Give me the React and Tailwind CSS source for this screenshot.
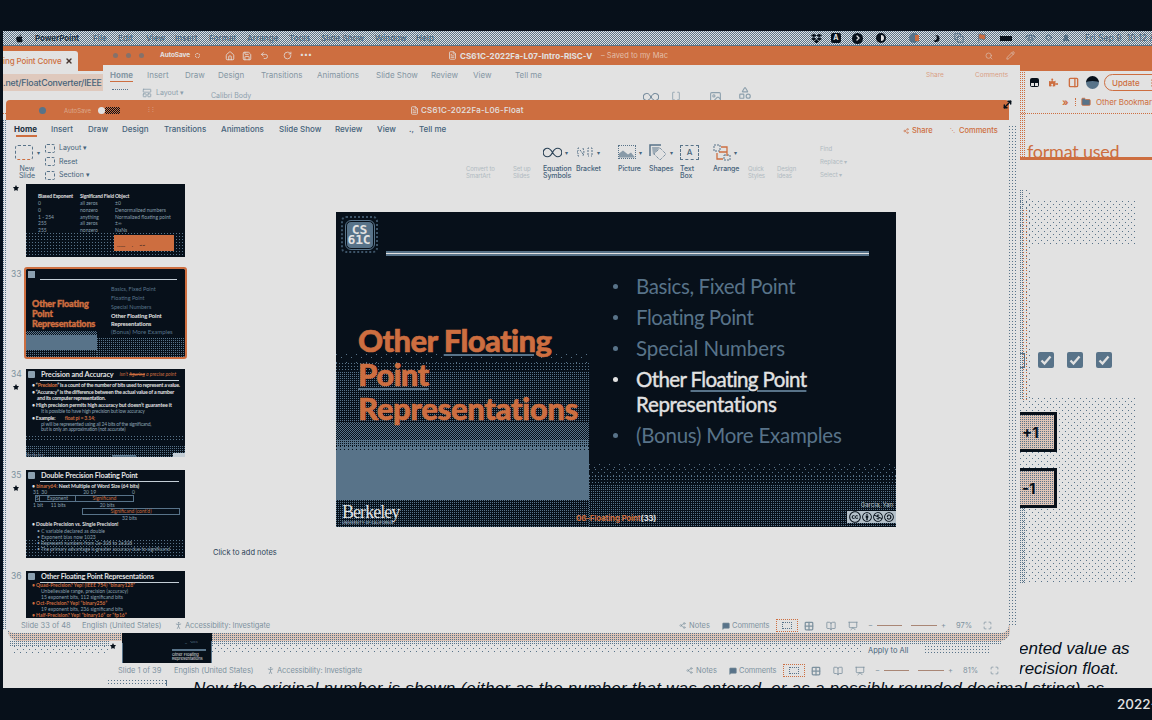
import React from "react";
import { FaApple, FaDropbox, FaMoon, FaStar, FaPuzzlePiece, FaCreativeCommonsBy, FaCreativeCommonsNc, FaCreativeCommonsSa, FaCreativeCommons } from "react-icons/fa";
import { Wifi, Search, ChevronRight, Copy, Flag, Undo2, RotateCw, Home, Save, FileText, Image, Shapes, PersonStanding, MessageSquare, Grid2x2, BookOpen, Presentation, Maximize, PanelRight, Folder, MoreVertical, Share2, Pencil, X, Brackets, UserRound, LayoutPanelTop, MoveDiagonal2 } from "lucide-react";

/* Dot screens used for shadows and gradients */
const HALF = "bg-[repeating-conic-gradient(#587389_0_25%,transparent_0_50%)] bg-[size:2px_2px]";
const QUARTER = "bg-[conic-gradient(from_270deg_at_1px_1px,#587389_90deg,transparent_0)] bg-[size:2px_2px]";
const NINTH = "bg-[conic-gradient(from_270deg_at_1px_1px,#587389_90deg,transparent_0)] bg-[size:3px_3px]";
const SPARSE = "bg-[conic-gradient(from_270deg_at_1px_1px,#587389_90deg,transparent_0),conic-gradient(from_270deg_at_1px_1px,#587389_90deg,transparent_0)] bg-[size:6px_6px] bg-[position:0_0,3px_3px]";
const FAINT = "bg-[conic-gradient(from_270deg_at_1px_1px,#587389_90deg,transparent_0),conic-gradient(from_270deg_at_1px_1px,#587389_90deg,transparent_0)] bg-[size:10px_8px] bg-[position:0_0,5px_3px]";
const DENSE = "bg-[#587389] bg-[conic-gradient(from_270deg_at_1px_1px,#07101a_90deg,transparent_0)] bg-[size:2px_2px]";
const DENSER = "bg-[#587389] bg-[conic-gradient(from_270deg_at_1px_1px,#07101a_90deg,transparent_0)] bg-[size:4px_3px]";
const WARM = "bg-[#dcc3b6] bg-[conic-gradient(from_270deg_at_1px_1px,#587389_90deg,transparent_0)] bg-[size:2px_2px]";

function Cells({ items, className }) {
  return (
    <div className={"flex items-center whitespace-nowrap " + className}>
      {items.map(([label, w], i) => (
        <span key={i} className={"shrink-0 " + w}>{label}</span>
      ))}
    </div>
  );
}

const menus = [
  ["File", "w-[25px]"], ["Edit", "w-[28px]"], ["View", "w-[29px]"], ["Insert", "w-[34px]"], ["Format", "w-[38px]"],
  ["Arrange", "w-[42px]"], ["Tools", "w-[32px]"], ["Slide Show", "w-[54px]"], ["Window", "w-[41px]"], ["Help", "w-[30px]"],
];

function MenuBar() {
  return (
    <div className={"h-[15px] shrink-0 flex items-center border-b border-[#587389] text-[8px] tracking-[0.1px] text-[#46637a] pl-3 " + HALF}>
      <FaApple className="size-[9px] text-[#07101a] mr-[11px] shrink-0" />
      <span className="w-[58px] shrink-0 font-bold text-[#1b2f40] tracking-[-0.1px]">PowerPoint</span>
      <Cells items={menus} className="font-medium" />
      <div className="ml-auto flex items-center shrink-0 text-[#07101a] w-[341px] [&>*]:shrink-0">
        <FaDropbox className="size-[11px] mr-[9px]" />
        <span className="size-[10px] rounded-[2px] bg-[#07101a] text-[#e2e2e2] text-[7px] leading-[10px] text-center font-bold mr-[11px]">A</span>
        <span className="size-[11px] rounded-full bg-[#07101a] text-[#e2e2e2] flex items-center justify-center mr-[13px]"><ChevronRight size={8} strokeWidth={4} /></span>
        <span className="size-[10px] rounded-full bg-[#07101a] flex items-center justify-end pr-[2px] mr-[23px]"><span className="w-[3px] h-[6px] rounded-r-full bg-[#e2e2e2]" /></span>
        <span className="size-[10px] rounded-full bg-[#587389] flex items-center justify-end mr-[14px]"><span className="w-[4px] h-[6px] bg-[#cd6e40]" /></span>
        <FaMoon className="size-[7px] mr-[14px] -scale-x-100" />
        <Copy size={10} strokeWidth={2.5} className="text-[#587389] mr-[13px]" />
        <Flag size={10} className="text-[#587389] fill-[#cd6e40] mr-[13px]" />
        <span className="w-[12px] h-[5px] bg-[#07101a] mr-[13px]" />
        <Wifi size={11} strokeWidth={3} className="text-[#587389] mr-[9px]" />
        <Search size={8} strokeWidth={3} className="text-[#587389] mr-[9px]" />
        <UserRound size={8} strokeWidth={3} className="text-[#46637a] fill-[#587389] mr-[15px]" />
        <span className="whitespace-nowrap text-[8.5px] text-[#46637a]">Fri Sep 9&nbsp; 10:12 A</span>
      </div>
    </div>
  );
}

function Browser() {
  return (
    <div className="flex-1 min-h-0 flex flex-col relative overflow-hidden">
      <div className="h-[25px] bg-[#cd6e40] shrink-0 flex items-end">
        <div className="w-[75px] h-[20px] bg-[#e2e2e2] rounded-tr-[3px] flex items-center text-[8px] text-[#cd6e40] whitespace-nowrap">
          <span className="w-[62px] shrink-0 font-medium tracking-[-0.1px]">ing Point Conve</span>
          <X size={8} strokeWidth={4} className="text-[#46352f] shrink-0" />
        </div>
      </div>
      <div className="h-[29px] shrink-0 flex justify-between pt-[3px]">
        <div className="w-[110px] h-[17px] bg-[#dfc9bd] text-[8.8px] leading-[17px] text-[#46637a] whitespace-nowrap font-medium tracking-[-0.2px]">.net/FloatConverter/IEEE</div>
        <div className="w-[125px] h-[17px] flex items-center text-[#cd6e40]">
          <span className="size-[9px] rounded-[2px] bg-[#07101a] flex items-end justify-center gap-px pb-px mr-[10px] ml-[3px] shrink-0"><span className="size-[3px] bg-[#e2e2e2]" /><span className="size-[3px] bg-[#e2e2e2]" /></span>
          <FaPuzzlePiece className="size-[9px] mr-[10px] shrink-0" />
          <PanelRight size={11} strokeWidth={3} className="mr-[7px] shrink-0" />
          <span className="size-[13px] rounded-full bg-[#587389] border-t-[5px] border-[#07101a] mr-[5px] shrink-0" />
          <span className="h-[17px] w-[70px] shrink-0 rounded-l-full border border-[#cd6e40] flex items-center pl-[7px] text-[8px] font-medium">Update<MoreVertical size={10} className="ml-[7px]" /></span>
        </div>
      </div>
      <div className="h-[20px] -mt-[6px] shrink-0 flex items-center justify-end text-[8px] tracking-[-0.1px] text-[#cd6e40] border-b border-dotted border-[#cd6e40] whitespace-nowrap">
        <div className="w-[90px] flex items-center shrink-0 -mt-[4px]">
          <span className="text-[10px] leading-[10px] font-bold w-[13px] shrink-0">»</span><span className="w-[6px] shrink-0 border-l border-dotted border-[#cd6e40] h-[8px]" />
          <Folder size={10} className="fill-[#587389] mr-[5px] shrink-0" />Other Bookmark
        </div>
      </div>
      <div className="flex-1 flex flex-col pl-[1017px]">
        <div className="h-[46px] shrink-0 border-b-[3px] border-[#cd6e40] pt-[26px] pl-[7px] text-[18px] leading-[23px] text-[#cd6e40] font-['Lato'] tracking-[-0.22px] whitespace-nowrap">format used</div>
        <div className={"mt-[41px] w-[115px] h-[45px] shrink-0 " + SPARSE} />
        <div className="h-[122px] flex gap-[13px] shrink-0 mb-[30px] items-end">
          <span className="w-[5px] h-[15px] border border-l-0 border-[#587389]" />
          {[0, 1, 2].map((k) => (
            <span key={k} className="size-[16px] rounded-[2px] bg-[#587389] flex items-center justify-center">
              <svg viewBox="0 0 12 12" className="size-[12px]"><path d="M1.5 6.5l3 3 6-7" fill="none" stroke="#e2e2e2" strokeWidth="2.3" /></svg>
            </span>
          ))}
        </div>
        <div className={"w-[115px] h-[185px] shrink-0 pt-[14px] flex flex-col gap-[16px] " + SPARSE}>
          {["+1", "-1"].map((s) => (
            <div key={s} className="w-[37px] h-[40px] border-[3px] border-l-0 border-[#07101a] bg-[#e2e2e2]">
              <div className={"h-full text-[15px] leading-[35px] font-bold text-[#07101a] pl-[2px] font-['Inter'] " + WARM}>{s}</div>
            </div>
          ))}
        </div>
      </div>
      <div className="h-[49px] shrink-0 font-['Liberation_Sans'] italic text-[17px] leading-[20px] text-[#07101a] whitespace-nowrap">
        <div className="pl-[1016px]">ented value as</div>
        <div className="pl-[1016px]">recision float.</div>
        <div className="pl-[190px] tracking-[0.23px]">Now the original number is shown (either as the number that was entered, or as a possibly rounded decimal string) as</div>
      </div>
    </div>
  );
}

function StatusBar({ slide, zoom, first, w, right }) {
  return (
    <div className={"h-[15px] shrink-0 flex items-center text-[7.5px] text-[#7e929f] whitespace-nowrap " + first}>
      <span className={"shrink-0 " + w}>{slide}</span>
      <span className="w-[92px] shrink-0 tracking-[-0.05px]">English (United States)</span>
      <PersonStanding size={9} className="mr-[2px]" />
      <span className="tracking-[-0.1px]">Accessibility: Investigate</span>
      <div className={"ml-auto flex items-center shrink-0 " + right}>
        <Share2 size={7} className="mr-[3px]" /><span className="w-[33px]">Notes</span>
        <MessageSquare size={8} className="fill-[#587389] mr-[2px]" /><span className="w-[44px] tracking-[-0.1px]">Comments</span>
        <span className="w-[22px] h-[13px] border border-dotted border-[#cd6e40] flex items-center justify-center mr-[6px]"><span className="w-[10px] h-[7px] border border-dotted border-[#587389]" /></span>
        <Grid2x2 size={10} strokeWidth={3} className="mr-[12px]" />
        <BookOpen size={10} className="mr-[12px]" />
        <Presentation size={10} className="mr-[10px]" />
        <span className="w-[9px]">−</span>
        <span className="w-[25px] h-px bg-[#a98675] mr-[9px]" /><span className="w-[26px] h-px bg-[#a98675] mr-[4px]" />
        <span className="w-[15px]">+</span><span className="w-[27px]">{zoom}</span>
        <Maximize size={9} />
      </div>
    </div>
  );
}

const backTabs = [
  ["Home", "w-[37px] font-bold"], ["Insert", "w-[38px]"], ["Draw", "w-[33px]"], ["Design", "w-[43px]"], ["Transitions", "w-[56px]"],
  ["Animations", "w-[59px]"], ["Slide Show", "w-[55px]"], ["Review", "w-[42px]"], ["View", "w-[42px]"], ["Tell me", "w-[40px]"],
];

function BackWindow() {
  return (
    <section className="absolute left-[103px] top-[46px] w-[917px] h-[634px] rounded-b-[8px] bg-[#e2e2e2] flex flex-col overflow-hidden">
      <header className="h-[19px] shrink-0 bg-[#cd6e40] flex items-center text-[#e2e2e2] text-[7px] whitespace-nowrap pl-[10px] [&>*]:shrink-0">
        <div className="flex gap-[8px] w-[47px]">
          <span className="size-[5px] rounded-full bg-[#85716a]" /><span className="size-[5px] rounded-full bg-[#85716a]" /><span className="size-[5px] rounded-full bg-[#85716a]" />
        </div>
        <span className="w-[35px] font-bold text-[6.5px] tracking-[-0.1px]">AutoSave</span><span className="size-[5px] rounded-full border border-dotted border-[#e2e2e2] mr-[25px]" />
        <Home size={10} className="mr-[7px]" /><Save size={10} className="mr-[8px]" /><Undo2 size={9} className="mr-[14px]" /><RotateCw size={9} className="mr-[8px]" />
        <span className="w-[148px]">•••</span>
        <FileText size={9} className="mr-[3px]" />
        <span className="font-bold text-[8px] w-[141px] tracking-[0.05px]">CS61C-2022Fa-L07-Intro-RISC-V</span>
        <span className="text-[7.5px] text-[#e3bea9]">– Saved to my Mac</span>
        <Search size={8} className="ml-auto mr-[13px] opacity-70" /><Pencil size={9} className="mr-[5px] opacity-70" />
      </header>
      <div className="h-[19px] shrink-0 flex items-center pl-[7px] text-[8px] text-[#8496a2]">
        <Cells items={backTabs} className="" />
        <span className="ml-auto text-[6.500px] pt-[3px] text-[#d9a084] w-[49px]">Share</span>
        <span className="text-[6.500px] pt-[3px] text-[#d9a084] w-[45px]">Comments</span>
      </div>
      <div className="h-px w-[23px] ml-[7px] bg-[#cd6e40] shrink-0 -mt-[3px]" />
      <div className="h-[18px] mt-[2px] shrink-0 flex items-center pl-[9px] text-[#8da0ad] text-[7px]">
        <span className="w-[16px] h-[9px] border-t border-dotted border-[#587389] mr-[14px]" />
        <LayoutPanelTop size={10} className="mr-[4px]" /><span className="w-[55px]">Layout ▾</span>
        <span className="w-[432px] pt-[6px] leading-[8px]">Calibri Body</span>
        <span className="mr-[12px] mt-[8px]"><svg viewBox="0 0 18 10" className="w-[16px] h-[10px]"><path d="M9 5C7 1.500 5.500 1 4.200 1a4 4 0 000 8C6 9 7.500 8 9 5s3-4 4.800-4a4 4 0 010 8C12 9 11 8 9 5z" fill="none" stroke="#587389" /></svg></span><Brackets size={10} className="mr-[28px] mt-[6px]" />
        <Image size={13} className="mr-[16px] mt-[9px]" /><Shapes size={14} />
      </div>
      <div className="mt-auto h-[47px] shrink-0 flex flex-col">
        <div className="flex h-[30px]">
          <FaStar className="size-[6px] ml-[7px] mr-[6px] mt-[10px] text-[#07101a]" />
          <div className="w-[90px] h-[30px] bg-[#07101a] border-x border-[#587389] flex justify-end pr-[5px]">
            <div className="w-[34px] pt-[3px] text-[4px] leading-[4.4px] text-[#587389] whitespace-nowrap">
              <div>Basics, Fixed</div><div className="mb-[4px]">Floating Point</div><div className="h-[2px] bg-[#587389] mb-[2px]" /><div className="text-[#e2e2e2]">Other Floating</div><div className="text-[#e2e2e2]">Representations</div>
            </div>
          </div>
          <span className="ml-[656px] mt-[12px] text-[7.5px] leading-[12px] text-[#46637a] whitespace-nowrap">Apply to All</span>
        </div>
        <StatusBar slide="Slide 1 of 39" zoom="81%" first="pl-[15px]" w="w-[56px]" right="pr-[21px]" />
      </div>
    </section>
  );
}

const tabs = [
  ["Home", "w-[37px] font-bold text-[#1b2f40]"], ["Insert", "w-[37px]"], ["Draw", "w-[34px]"], ["Design", "w-[42px]"], ["Transitions", "w-[57px]"],
  ["Animations", "w-[58px]"], ["Slide Show", "w-[56px]"], ["Review", "w-[42px]"], ["View", "w-[32px]"], [".,", "w-[10px]"], ["Tell me", "w-[40px]"],
];

function Tool({ icon, label, className, caret = true }) {
  return (
    <div className={"shrink-0 flex flex-col text-[7px] leading-[7px] text-[#46637a] font-medium tracking-[-0.1px] " + className}>
      <div className="h-[20px] flex items-center gap-[3px] mb-[3px]">{icon}{caret && <span className="text-[6px]">▾</span>}</div>
      <div className="whitespace-pre-line">{label}</div>
    </div>
  );
}

function Ribbon() {
  return (
    <div className="h-[42px] shrink-0 flex pt-[2px] pl-[9px] text-[#587389]">
      <div className="w-[30px] shrink-0 text-[7px] leading-[7px] text-[#46637a]">
        <div className="flex items-center gap-[4px] h-[20px] mb-[3px]"><span className="w-[18px] h-[15px] shrink-0 rounded-[3px] border border-dashed border-[#587389] border-b-[#cd6e40]" /><span className="text-[6px]">▾</span></div>
        <div className="text-center w-[24px]">New<br />Slide</div>
      </div>
      <div className="w-[421px] shrink-0 flex flex-col text-[7px] text-[#46637a]">
        {["Layout ▾", "Reset", "Section ▾"].map((s) => (
          <div key={s} className="h-[13.3px] flex items-center gap-[4px]"><span className="w-[10px] h-[9px] rounded-[2px] border border-dashed border-[#587389]" />{s}</div>
        ))}
      </div>
      <Tool className="w-[47px] !text-[#b0bac1] !text-[6px] !font-normal" icon={<span />} caret={false} label={"Convert to\nSmartArt"} />
      <Tool className="w-[30px] !text-[#b0bac1] !text-[6px] !font-normal" icon={<span />} caret={false} label={"Set up\nSlides"} />
      <Tool className="w-[33px]" icon={<svg viewBox="0 0 18 10" className="w-[19px] h-[11px]"><path d="M9 5C7 1.5 5.5 1 4.2 1a4 4 0 000 8C6 9 7.500 8 9 5s3-4 4.800-4a4 4 0 010 8C12 9 11 8 9 5z" fill="none" stroke="#2b4357" strokeWidth="1.100" /></svg>} label={"Equation\nSymbols"} />
      <Tool className="w-[42px]" icon={<svg viewBox="0 0 18 10" className="w-[18px] h-[10px] shrink-0" fill="none" stroke="#587389" strokeDasharray="2 1"><path d="M3 1H2v3L1 5l1 1v3h1M4 3l3 4M7 1l1 4-1 4M13 1h-1v8h1M15 1h1v8h-1" /></svg>} label="Bracket" />
      <Tool className="w-[31px]" icon={<span className="w-[18px] h-[14px] border border-dotted border-[#587389] flex items-end shrink-0"><svg viewBox="0 0 16 8" className="w-full h-[9px]"><path d="M0 8V4l4-3 5 4 3-2 4 5z" fill="#587389" opacity=".65" /></svg></span>} label="Picture" />
      <Tool className="w-[31px]" icon={<svg viewBox="0 0 18 17" className="w-[18px] h-[17px] shrink-0"><path d="M1 12V1h11" fill="none" stroke="#587389" strokeWidth="1.500" /><path d="M3 3h8L4 11z" fill="#587389" opacity=".5" /><path d="M11 4l6 6-6 6-6-6z" fill="none" stroke="#587389" strokeDasharray="1 1" /></svg>} label="Shapes" />
      <Tool className="w-[33px]" icon={<span className="w-[19px] h-[15px] border border-dashed border-[#587389] text-[8px] leading-[13px] text-center">A</span>} caret={false} label={"Text\nBox"} />
      <Tool className="w-[35px]" icon={<svg viewBox="0 0 18 17" className="w-[18px] h-[17px] shrink-0" fill="none"><path d="M1 1h6v6H1zM11 11h6v5h-6z" stroke="#587389" strokeDasharray="2 1" /><path d="M8 3h6v5M4 9v6h6M6 8h8v4" stroke="#cd6e40" strokeWidth="1.300" /></svg>} label="Arrange" />
      <Tool className="w-[29px] !text-[#b0bac1] !text-[6px] !font-normal" icon={<span />} caret={false} label={"Quick\nStyles"} />
      <Tool className="w-[43px] !text-[#b0bac1] !text-[6px] !font-normal" icon={<span />} caret={false} label={"Design\nIdeas"} />
      <div className="text-[6px] text-[#b0bac1] flex flex-col">{["Find", "Replace ▾", "Select ▾"].map((s) => <span key={s} className="h-[13px] leading-[13px]">{s}</span>)}</div>
    </div>
  );
}

function ThumbFoot() {
  return (
    <div className={"mt-auto h-[11px] shrink-0 flex items-end justify-between " + QUARTER}>
      <span className="text-[5px] leading-[5px] text-[#8ba0b0] font-['Liberation_Serif']">Berkeley</span>
      <span className="w-[24px] h-[2px] bg-[#587389] ml-[30px]" />
      <span className="w-[12px] h-[4px] bg-[#c4ced6]" />
    </div>
  );
}

function ThumbHead({ children, extra, className = "" }) {
  return (
    <>
      <div className="h-[10px] flex items-center pl-[2px] shrink-0">
        <span className="size-[7px] bg-[#8ba0b0] rounded-[1px] mr-[6px] shrink-0" />
        <span className={"text-[7.300px] leading-[9px] font-bold text-[#e2e2e2] " + className}>{children}</span>
        <span className="text-[5px] text-[#cd6e40] italic ml-[6px]">{extra}</span>
      </div>
      <div className="h-px mt-px ml-[14px] mr-[6px] bg-[#c4ced6] shrink-0" />
    </>
  );
}

function Thumb({ n, star, selected, children, className }) {
  return (
    <div className="flex shrink-0">
      <div className="w-[20px] pl-[5px] pt-[1px] text-[8.5px] leading-[9px] text-[#7e929f]">{n}{star && <FaStar className={"size-[6px] ml-[2px] text-[#07101a] " + (n ? "mt-[5px]" : "")} />}</div>
      <div className={"w-[159px] bg-[#07101a] flex flex-col overflow-hidden whitespace-nowrap text-[5px] leading-[6px] text-[#8ba0b0] font-['Lato'] " + className + (selected ? " outline-2 outline-[#cd6e40] rounded-[1px]" : "")}>{children}</div>
    </div>
  );
}

function Thumbs() {
  const rows = [["0", "all zeros", "±0"], ["0", "nonzero", "Denormalized numbers"], ["1 - 254", "anything", "Normalized floating point"], ["255", "all zeros", "±∞"], ["255", "nonzero", "NaNs"]];
  return (
    <aside className="w-[199px] h-[436px] shrink-0 pt-[2px] flex flex-col overflow-hidden">
      <Thumb star className="h-[73px] mb-[12px]">
        <div className="grid grid-cols-[42px_35px_1fr] pl-[12px] pt-[9px] text-[5px] font-bold text-[#e2e2e2] tracking-[-0.15px]"><span>Biased Exponent</span><span>Significand Field</span><span>Object</span></div>
        {rows.map((r, i) => <div key={i} className="grid grid-cols-[42px_35px_1fr] pl-[12px] h-[6.8px] pt-[1px]">{r.map((c, j) => <span key={j}>{c}</span>)}</div>)}
        <div className={"flex-1 flex items-start justify-end pr-[11px] pt-[2px] " + NINTH}><div className="w-[60px] h-[16px] bg-[#cd6e40] text-[#07101a] pl-[3px] pt-[7px] leading-[6px]">....... &nbsp; &nbsp; . &nbsp; &nbsp; ~~</div></div>
      </Thumb>
      <Thumb n="33" selected className="h-[88px] mb-[12px]">
        <div className="h-[12px] flex items-start pl-[2px] pt-[2px] shrink-0"><span className="size-[7px] bg-[#8ba0b0]" /><span className="mt-[8px] ml-[5px] h-px w-[137px] bg-[#c4ced6]" /></div>
        <div className="flex flex-1 pt-[4px]">
          <div className="w-[71px] flex flex-col">
            <div className="pl-[6px] pt-[14px] h-[46px] text-[9px] leading-[10px] font-black text-[#cd6e40] tracking-[-0.15px] [-webkit-text-stroke:0.4px_#cd6e40]">Other Floating<br />Point<br />Representations</div>
            <div className={"h-[4px] " + HALF} /><div className="h-[15px] bg-[#587389]" /><div className={"flex-1 " + QUARTER} />
          </div>
          <div className="flex-1 flex flex-col">
            <div className="pl-[14px] flex flex-col text-[5.500px] leading-[8px] text-[#587389]">
              <span className="h-[9px]">Basics, Fixed Point</span><span className="h-[9px]">Floating Point</span><span className="h-[9px]">Special Numbers</span>
              <span className="text-[#e2e2e2] font-bold text-[5.800px] tracking-[-0.1px]">Other Floating Point<br />Representations</span><span className="text-[6px]">(Bonus) More Examples</span>
            </div>
            <div className={"mt-[2px] flex-1 " + QUARTER} />
          </div>
        </div>
      </Thumb>
      <Thumb n="34" star className="h-[88px] mb-[13px]">
        <ThumbHead className="tracking-[-0.1px]" extra={<>isn’t <s>figuring</s> a precise point</>}>Precision and Accuracy</ThumbHead>
        <div className="pl-[6px] pt-[1px] text-[#e2e2e2] font-bold leading-[6.600px] text-[5.200px] tracking-[-0.2px]">
          <div>• “<b className="text-[#cd6e40]">Precision</b>” is a count of the number of bits used to represent a value.</div>
          <div>• “Accuracy” is the difference between the actual value of a number</div>
          <div className="pl-[5px]">and its computer representation.</div>
          <div className="tracking-[-0.08px]">• High precision permits high accuracy but doesn’t guarantee it</div>
          <div className="pl-[9px] font-normal text-[#8ba0b0] text-[5px]">It is possible to have high precision but low accuracy</div>
          <div>• Example: &nbsp; &nbsp; &nbsp; &nbsp; <span className="text-[#cd6e40]">float pi = 3.14;</span></div>
          <div className="pl-[9px] font-normal text-[#8ba0b0] text-[5px] leading-[5px]">pi will be represented using all 24 bits of the significand,<br />but is only an approximation (not accurate)</div>
        </div>
        <div className={"mt-auto h-[6px] " + NINTH} /><ThumbFoot />
      </Thumb>
      <Thumb n="35" star className="h-[88px] mb-[13px]">
        <ThumbHead className="tracking-[-0.18px]">Double Precision Floating Point</ThumbHead>
        <div className="pl-[6px] mt-[1px] text-[#e2e2e2] font-bold text-[5.200px] tracking-[-0.05px]">• <span className="text-[#cd6e40]">binary64:</span> Next Multiple of Word Size (64 bits)</div>
        <div className="pl-[7px] pr-[50px] flex justify-between leading-[6px]"><span>31 &nbsp;30</span><span>20 19</span><span>0</span></div>
        <div className="ml-[9px] w-[99px] h-[7px] border border-[#587389] flex shrink-0 leading-[5px]"><span className="w-[4px] border-r border-[#587389]">S</span><span className="w-[36px] text-center border-r border-[#587389]">Exponent</span><span className="flex-1 text-center text-[#cd6e40]">Significand</span></div>
        <div className="pl-[7px] leading-[6px]">1 bit &nbsp; &nbsp; &nbsp;11 bits<span className="ml-[34px]">20 bits</span></div>
        <div className="ml-[56px] w-[98px] h-[7px] border border-[#587389] text-center text-[#cd6e40] leading-[5px] shrink-0">Significand (cont’d)</div>
        <div className="pl-[96px] leading-[6px]">32 bits</div>
        <div className="pl-[6px] text-[#e2e2e2] font-bold leading-[7px]">• Double Precision vs. Single Precision!</div>
        <div className="pl-[11px] leading-[6px]">• C variable declared as double<br />• Exponent bias now 1023</div>
        <div className={"flex-1 pl-[11px] leading-[6px] tracking-[-0.05px] " + NINTH}>• Represent numbers from 2e-308 to 2e308<br />• The primary advantage is greater accuracy due to significand</div>
      </Thumb>
      <Thumb n="36" className="h-[47px]">
        <ThumbHead className="tracking-[-0.22px]">Other Floating Point Representations</ThumbHead>
        <div className="pl-[6px] leading-[5.900px]">
          <div className="text-[#cd6e40] font-bold">• Quad-Precision? Yep! (IEEE 754) “binary128”</div>
          <div className="pl-[9px]">Unbelievable range, precision (accuracy)<br />15 exponent bits, 112 significand bits</div>
          <div className="text-[#cd6e40] font-bold">• Oct-Precision? Yep! “binary256”</div>
          <div className="pl-[9px]">19 exponent bits, 236 significand bits</div>
          <div className="text-[#cd6e40] font-bold">• Half-Precision? Yep! “binary16” or “fp16”</div>
        </div>
      </Thumb>
    </aside>
  );
}

function Chip() {
  return (
    <div className="size-[37px] border-2 border-dotted border-[#3d5468] rounded-[5px] flex items-center justify-center ml-[5px] mt-[4px] shrink-0">
      <div className="size-[28px] rounded-[5px] border border-[#07101a] outline outline-[#587389] bg-[#587389] text-[#e2e2e2] font-bold font-['DejaVu_Sans_Mono'] text-[13px] leading-[10px] text-center pt-[3px] tracking-[-0.2px]">CS<br /><span className="-ml-[1px]">61C</span></div>
    </div>
  );
}

function Bullet({ children, bright, className, track = "tracking-[-0.38px]" }) {
  return (
    <li className={"flex " + className}>
      <span className={"size-[5px] rounded-full mt-[13px] mr-[18px] shrink-0 " + (bright ? "bg-[#e2e2e2]" : "bg-[#587389]")} />
      <span className={"whitespace-nowrap pt-[3px] " + track + (bright ? " text-[#e2e2e2] [-webkit-text-stroke:0.4px_#e2e2e2]" : " text-[#587389]")}>{children}</span>
    </li>
  );
}

function Slide() {
  return (
    <div className="w-[560px] h-[315px] bg-[#07101a] flex flex-col overflow-hidden relative">
      <div className="absolute inset-x-0 bottom-0 h-[173px] flex" aria-hidden="true">
        <div className="w-[253px] flex flex-col">
          <div className={"h-[9px] " + FAINT} /><div className={"h-[9px] " + NINTH} /><div className={"h-[51px] " + QUARTER} /><div className={"h-[16px] " + HALF} /><div className={"h-[7px] " + DENSE} /><div className={"h-[6px] " + DENSER} />
          <div className="h-[48px] bg-[#587389]" /><div className={"flex-1 " + QUARTER} />
        </div>
        <div className="flex-1 flex flex-col justify-end"><div className={"h-[5px] " + FAINT} /><div className={"h-[7px] " + SPARSE} /><div className={"h-[9px] " + NINTH} /><div className={"h-[42px] " + QUARTER} /></div>
      </div>
      <div className="flex h-[44px] shrink-0">
        <Chip />
        <div className="mt-[39px] ml-[8px] w-[483px] h-[5px] shrink-0 bg-[#587389] py-[2px]"><div className="h-px bg-[#e2e2e2]" /></div>
      </div>
      <div className="flex h-[240px] shrink-0 relative font-['Lato']">
        <h1 className="w-[277px] shrink-0 pl-[22px] pt-[67px] text-[31px] leading-[34px] font-black text-[#cd6e40] whitespace-nowrap [-webkit-text-stroke:0.6px_#cd6e40] tracking-[-0.62px]">
          Other <span className="underline decoration-[#587389] decoration-2 underline-offset-[2px]">Floating</span><br /><span className="underline decoration-[#587389] decoration-2 underline-offset-[2px]">Point</span><br /><span className="tracking-[-0.36px]">Representations</span>
        </h1>
        <ul className="pt-[15px] text-[20.5px] leading-[25px]">
          <Bullet className="h-[31px]">Basics, Fixed Point</Bullet>
          <Bullet className="h-[31px]" track="tracking-[-0.52px]">Floating Point</Bullet>
          <Bullet className="h-[31px]" track="tracking-[-0.1px]">Special Numbers</Bullet>
          <Bullet className="h-[56px]" track="tracking-[-0.62px]" bright>Other <span className="underline decoration-[#587389] decoration-2 underline-offset-[3px]">Floating Point</span><br /><span className="tracking-[-0.3px]">Representations</span></Bullet>
          <Bullet className="h-[31px]" track="tracking-[-0.25px]">(Bonus) More Examples</Bullet>
        </ul>
      </div>
      <footer className="flex-1 flex relative">
        <div className="pl-[6px] pt-[7px] w-[120px]"><div className="font-['Liberation_Serif'] text-[18px] leading-[18px] text-[#e2e2e2] tracking-[-0.95px]">Berkeley</div><div className="text-[3.500px] leading-[4px] text-[#8ba0b0] font-bold tracking-[0.1px] whitespace-nowrap">UNIVERSITY OF CALIFORNIA</div></div>
        <div className="pt-[17px] ml-[120px] text-[8px] leading-[11px] font-bold text-[#cd6e40] tracking-[-0.2px] whitespace-nowrap">06-Floating Point<span className="text-[#e2e2e2]">(33)</span></div>
        <div className="ml-auto w-[100px] flex flex-col items-end pt-[5px]">
          <span className="text-[6px] leading-[8px] text-[#b4c0c9] pr-[3px]">Garcia, Yan</span>
          <div className="w-[49px] h-[12px] mt-[2px] bg-[#b4c0c9] flex items-center text-[#07101a] pl-[2px] gap-[1px]"><FaCreativeCommons className="size-[12px]" /><FaCreativeCommonsBy className="size-[10px]" /><FaCreativeCommonsNc className="size-[10px]" /><FaCreativeCommonsSa className="size-[10px]" /></div>
        </div>
      </footer>
    </div>
  );
}

function FrontWindow() {
  return (
    <section className="absolute left-[6px] top-[100px] w-[1003px] h-[533px] bg-[#e2e2e2] rounded-t-[4px] rounded-b-[8px] flex flex-col overflow-hidden">
      <header className="h-[20px] shrink-0 bg-[#cd6e40] flex items-center text-[#e2e2e2] whitespace-nowrap pl-[33px] text-[7px] [&>*]:shrink-0">
        <span className="size-[7px] rounded-full bg-[#587389] mr-[18px]" />
        <span className="w-[34px] text-[#dba98e] text-[6px]">AutoSave</span>
        <span className="size-[7px] rounded-full bg-[#e2e2e2] z-10" />
        <span className="w-[15px] h-[7px] bg-[repeating-conic-gradient(#07101a_0_25%,transparent_0_50%)] bg-[size:2px_2px] mr-[28px]" />
        <span className="w-[262px] text-[#dba98e]">⁝ ⁝</span>
        <FileText size={9} className="mr-[2px]" />
        <span className="text-[8px] tracking-[0.18px] font-medium">CS61C-2022Fa-L06-Float</span>
      </header>
      <div className="h-[20px] shrink-0 flex items-center pl-[8px] pb-[2px] text-[8px] text-[#46637a] font-medium">
        <Cells items={tabs} className="" />
        <div className="ml-auto flex items-center text-[#cd6e40] text-[7.5px] pt-[3px]"><Share2 size={6} className="mr-[3px]" /><span className="w-[38px]">Share</span><span className="w-[9px] text-[5px]">⋱</span><span className="w-[50px]">Comments</span></div>
      </div>
      <div className="h-[2px] w-[21px] ml-[10px] -mt-[5px] mb-[3px] bg-[#cd6e40] shrink-0" />
      <Ribbon />
      <div className="flex flex-1 min-h-0">
        <Thumbs />
        <main className="flex-1 flex flex-col">
          <div className="pl-[131px] pt-[30px]"><Slide /></div>
          <p className="pl-[8px] pt-[20px] text-[7.5px] leading-[12px] text-[#2b4357]">Click to add notes</p>
        </main>
      </div>
      <StatusBar slide="Slide 33 of 48" zoom="97%" first="pl-[15px]" w="w-[61px]" right="pr-[17px]" />
    </section>
  );
}

export default function App() {
  return (
    <div className="w-[1152px] h-[720px] bg-[#07101a] relative overflow-hidden font-['Inter','Liberation_Sans',sans-serif] flex flex-col pt-[31px] pl-[3px]">
      <div className="h-[657px] bg-[#e2e2e2] flex flex-col overflow-hidden">
        <MenuBar />
        <Browser />
      </div>
      <div className="h-[32px] flex items-center justify-end text-[13.5px] font-medium text-[#e2e2e2]"><span className="w-[35px] shrink-0 whitespace-nowrap">2022-</span></div>
      <div className="absolute left-[1020px] top-[72px] w-[5px] h-[86px] bg-[conic-gradient(from_270deg_at_1px_1px,#cd6e40_90deg,transparent_0)] bg-[size:2px_2px]" />
      <div className={"absolute left-[1020px] top-[190px] w-[3px] h-[210px] " + QUARTER} />
      <div className={"absolute left-[1020px] top-[508px] w-[5px] h-[75px] " + QUARTER} />
      <div className="absolute left-[1023px] top-[210px] w-[4px] h-[190px] bg-[conic-gradient(from_270deg_at_1px_1px,#cd6e40_90deg,transparent_0)] bg-[size:3px_3px]" />
      <div className={"absolute left-[1026px] top-[190px] w-[6px] h-[210px] " + SPARSE} />
      <div className={"absolute left-[108px] top-[677px] w-[59px] h-[9px] border-r border-[#587389] " + NINTH} />
      <BackWindow />
      <div className={"absolute left-[1009px] top-[126px] w-[7px] h-[500px] " + NINTH} />
      <div className={"absolute left-[8px] top-[625px] w-[1002px] h-[16px] rounded-b-[10px] " + WARM} />
      <div className={"absolute left-[10px] top-[641px] w-[100px] h-[5px] " + QUARTER} />
      <div className={"absolute left-[212px] top-[641px] w-[790px] h-[4px] " + QUARTER} />
      <div className={"absolute left-[14px] top-[646px] w-[96px] h-[8px] " + SPARSE} />
      <div className={"absolute left-[212px] top-[645px] w-[650px] h-[7px] " + SPARSE} />
      <div className={"absolute left-[925px] top-[646px] w-[66px] h-[8px] " + NINTH} />
      <div className={"absolute left-[3px] top-[120px] w-[4px] h-[510px] " + QUARTER} />
      <div className="absolute left-[122px] top-[633px] w-[68px] h-[10px] bg-[#07101a]" />
      <div className="absolute left-[190px] top-[633px] w-[22px] h-[8px] bg-[#07101a]" />
      <FrontWindow />
      <MoveDiagonal2 size={11} strokeWidth={3} className="absolute left-[1002px] top-[99px] text-[#07101a] rotate-90" />
    </div>
  );
}
